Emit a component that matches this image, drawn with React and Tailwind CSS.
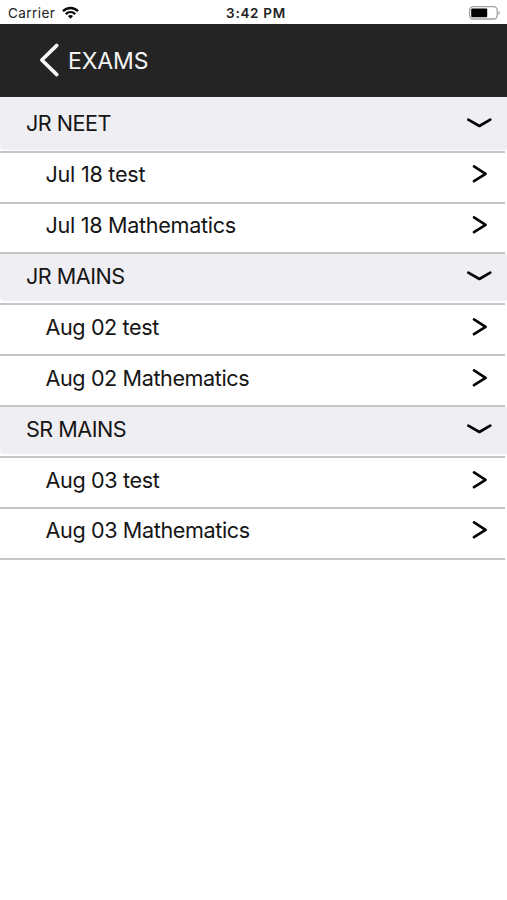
const sections = [
  {
    title: 'JR NEET',
    head: 'h-[56px]',
    fill: 'h-[53px] pt-[12px]',
    items: [
      { label: 'Jul 18 test', height: 'h-[51px]', row: 'pt-[7px]', track: 'tracking-[-0.25px]' },
      { label: 'Jul 18 Mathematics', height: 'h-[50px]', row: 'pt-[7px]', track: 'tracking-[-0.3px]' },
    ],
  },
  {
    title: 'JR MAINS',
    head: 'h-[51px]',
    fill: 'h-[47px] pt-[8px]',
    items: [
      { label: 'Aug 02 test', height: 'h-[51px]', row: 'pt-[8px]', track: 'tracking-[-0.4px]' },
      { label: 'Aug 02 Mathematics', height: 'h-[51px]', row: 'pt-[8px]', track: 'tracking-[-0.4px]' },
    ],
  },
  {
    title: 'SR MAINS',
    head: 'h-[51px]',
    fill: 'h-[47px] pt-[8px]',
    items: [
      { label: 'Aug 03 test', height: 'h-[51px]', row: 'pt-[8px]', track: 'tracking-[-0.35px]' },
      { label: 'Aug 03 Mathematics', height: 'h-[51px]', row: 'pt-[7px]', track: 'tracking-[-0.38px]' },
    ],
  },
];

function ChevronDown() {
  return (
    <svg className="mr-[14px] mt-[8px] h-[14px] w-[28px] shrink-0" viewBox="0 0 28 14" fill="none" stroke="#050505" strokeWidth="2.7" strokeLinecap="round" strokeLinejoin="round">
      <path d="M3.3 2.6 14.4 9 25.3 2.6" />
    </svg>
  );
}

function ChevronRight() {
  return (
    <svg className="mr-[19px] mt-[4px] h-[20px] w-[18px] shrink-0" viewBox="0 0 18 20" fill="none" stroke="#050505" strokeWidth="2.7" strokeLinecap="round" strokeLinejoin="round">
      <path d="M4 2.4 15.6 9.8 4 17.2" />
    </svg>
  );
}

function Line() {
  return (
    <div className="mr-[2px] mt-auto h-[2px] shrink-0 bg-[#c5c5c7]" />
  );
}

function StatusBar() {
  return (
    <div className="grid h-[24px] grid-cols-3 items-start text-[13.5px] leading-[27px] text-[#222]">
      <div className="flex pl-[8px]">
        <span className="w-[48px] tracking-[0.45px]">Carrier</span>
        <svg className="ml-[6px] mt-[6px] h-[14px] w-[17px]" viewBox="0 0 17 14" fill="none" stroke="#080808" strokeWidth="2.3">
          <path d="M1 5.2C5.2 .9 11.8 .9 16 5.2M3.7 8.2C6.5 5.5 10.5 5.5 13.3 8.2" />
          <path d="M8.5 12.8 5.9 10.1Q8.5 7.9 11.1 10.1Z" fill="#080808" stroke="none" />
        </svg>
      </div>
      <span className="pl-[5px] text-center font-semibold tracking-[0.7px]">3:42 PM</span>
      <svg className="ml-auto mr-[5px] mt-[5px] h-[16px] w-[34px]" viewBox="0 0 34 16">
        <rect x="1.6" y="1.6" width="27.6" height="12.4" rx="3.6" fill="#fff" stroke="#a0a0a0" strokeWidth="1.3" />
        <rect x="3.2" y="3.5" width="16" height="8.7" rx="1" fill="#000" />
        <path d="M30.6 5.9Q33.2 7.8 30.6 9.8Z" fill="#888" />
      </svg>
    </div>
  );
}

export default function App() {
  return (
    <div className="h-[900px] w-[507px] overflow-hidden whitespace-nowrap bg-white font-['Inter','Liberation_Sans',sans-serif]">
      <StatusBar />
      <header className="flex h-[73px] items-center bg-[#242424] pl-[38px] text-[#f4f4f4]">
        <svg className="h-[36px] w-[22px] -mt-px" viewBox="0 0 22 36" fill="none" stroke="#f6f6f6" strokeWidth="3.6" strokeLinecap="round" strokeLinejoin="round">
          <path d="M18.8 3.4 3.8 18 18.8 32.6" />
        </svg>
        <h1 className="ml-[8px] text-[23px] leading-[28px] tracking-[-0.1px]">EXAMS</h1>
      </header>
      <main className="text-[21.6px] leading-[28px] text-[#151515]">
        {sections.map((section) => (
          <section key={section.title}>
            <div className={`flex flex-col ${section.head}`}>
              <div className={`flex items-start justify-between rounded-bl-[4px] bg-[#efeef3] pl-[26px] ${section.fill}`}>
                <span className="tracking-[-0.5px]">{section.title}</span>
                <ChevronDown />
              </div>
              <Line />
            </div>
            {section.items.map((item) => (
              <div key={item.label} className={`flex flex-col ${item.height}`}>
                <div className={`flex justify-between pl-[45.5px] ${item.row}`}>
                  <span className={item.track}>{item.label}</span>
                  <ChevronRight />
                </div>
                <Line />
              </div>
            ))}
          </section>
        ))}
      </main>
    </div>
  );
}
